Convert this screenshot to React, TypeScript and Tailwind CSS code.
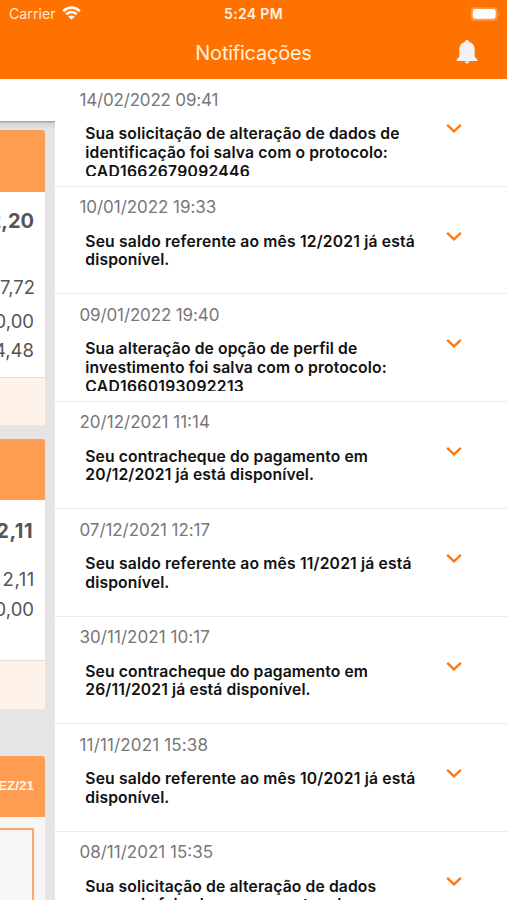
import React from "react";

type Notice = { date: string; tracking: string; lines: string[] };

const notices: Notice[] = [
  { date: "14/02/2022 09:41", tracking: "tracking-[-0.180px]", lines: ["Sua solicitação de alteração de dados de", "identificação foi salva com o protocolo:", "CAD1662679092446"] },
  { date: "10/01/2022 19:33", tracking: "tracking-[-0.050px]", lines: ["Seu saldo referente ao mês 12/2021 já está", "disponível."] },
  { date: "09/01/2022 19:40", tracking: "tracking-[-0.130px]", lines: ["Sua alteração de opção de perfil de", "investimento foi salva com o protocolo:", "CAD1660193092213"] },
  { date: "20/12/2021 11:14", tracking: "tracking-[0px]", lines: ["Seu contracheque do pagamento em", "20/12/2021 já está disponível."] },
  { date: "07/12/2021 12:17", tracking: "tracking-[-0.060px]", lines: ["Seu saldo referente ao mês 11/2021 já está", "disponível."] },
  { date: "30/11/2021 10:17", tracking: "tracking-[0.050px]", lines: ["Seu contracheque do pagamento em", "26/11/2021 já está disponível."] },
  { date: "11/11/2021 15:38", tracking: "tracking-[0.150px]", lines: ["Seu saldo referente ao mês 10/2021 já está", "disponível."] },
  { date: "08/11/2021 15:35", tracking: "tracking-[0px]", lines: ["Sua solicitação de alteração de dados", "pessoais foi salva com o protocolo:"] },
];

function lineTracking(line: string) {
  if (line.startsWith("CAD")) return "tracking-[0.290px]";
  if (line.startsWith("Seu saldo")) return "tracking-[0.170px]";
  return "tracking-[0.120px]";
}

function Header() {
  return (
    <header className="h-[79px] shrink-0 bg-[#ff7200] text-white">
      <div className="grid h-[27px] grid-cols-3 items-center pr-[6px] pl-[9px]">
        <div className="flex items-center gap-[6px] text-[14.2px] text-[#ffe9d6]">
          <span>Carrier</span>
          <svg className="h-[14px] w-[19px]" viewBox="0 0 19 14" fill="none" stroke="#fff8f0" strokeWidth="2.7">
            <path d="M1.2 5.2C6 .4 13 .4 17.8 5.2" />
            <path d="M4.2 8.4C7.3 5.4 11.7 5.4 14.8 8.4" />
            <path d="M9.5 13.8 6.2 10.6C8.200 9 10.800 9 12.800 10.600Z" fill="#fff8f0" stroke="none" />
          </svg>
        </div>
        <div className="pr-[3px] text-center text-[14px] font-semibold tracking-[0.330px] whitespace-nowrap text-[#fff3e6]">5:24 PM</div>
        <div className="flex justify-end">
          <svg className="h-[14px] w-[31px]" viewBox="0 0 31 14">
            <rect x="1" y=".3" width="26.500" height="13.400" rx="3.8" fill="#ff994a" />
            <rect x="2.8" y="2.1" width="22.8" height="9.600" rx="2.4" fill="#fff" />
            <path d="M28.4 4.8v4.4c1.8-.8 1.8-3.6 0-4.4Z" fill="#ff994a" />
          </svg>
        </div>
      </div>
      <div className="grid h-[50px] grid-cols-[1fr_auto_1fr] items-center pr-[28px] pl-[28px]">
        <span />
        <h1 className="pt-[1px] text-[20px] leading-[24px] tracking-[-0.230px] text-[#fff0dc]">Notificações</h1>
        <svg className="h-[26px] w-[24px] justify-self-end" viewBox="0 0 24 26" fill="#f4f1f6">
          <path d="M12 1c-1.3 0-2.1.9-2.1 2.1C6.300 4 4.300 6.900 4.300 10.600v7.200L1.600 20.600v1.300h20.800v-1.300l-2.700-2.800v-7.200c0-3.700-2-6.600-5.600-7.500C14.100 1.900 13.300 1 12 1Z" />
          <path d="M9.600 22.600h4.800c-.3 1.300-1.200 2-2.400 2s-2.100-.7-2.400-2Z" />
        </svg>
      </div>
    </header>
  );
}

function Value({ children, className }: { children: string; className: string }) {
  return <div className={"flex items-center justify-end whitespace-nowrap text-[#555] " + className}>{children}</div>;
}

function Backdrop() {
  return (
    <aside className="flex w-[55px] shrink-0 flex-col overflow-hidden bg-[#e5e5e5]">
      <div className="h-[42px] shrink-0 bg-white" />
      <div className="h-[9px] shrink-0 bg-linear-to-b from-[#969696] via-[#d5d5d5] via-25% to-[#e5e5e5]" />
      <section className="mr-[10px] h-[295px] shrink-0 overflow-hidden rounded-tr-[3px] bg-white">
        <div className="h-[62px] bg-[#ff9e52]" />
        <Value className="h-[58px] pr-[11px] text-[20px] font-bold">2,20</Value>
        <Value className="mt-[23px] h-[30px] pr-[10px] text-[18.500px]">7,72</Value>
        <Value className="mt-[4px] h-[30px] pr-[11px] text-[18.500px]">0,00</Value>
        <Value className="h-[28px] pr-[11px] text-[18.500px]">4,48</Value>
        <div className="mt-[12px] h-[48px] border-t border-[#e5ddd8] bg-[#fff3e9]" />
      </section>
      <section className="mt-[14px] mr-[10px] h-[270px] shrink-0 overflow-hidden rounded-tr-[3px] bg-white">
        <div className="h-[61px] bg-[#ff9e52]" />
        <Value className="h-[61px] pr-[12px] text-[20px] font-bold tracking-[0.500px]">2,11</Value>
        <Value className="mt-[4px] h-[30px] pr-[10px] text-[18.500px] tracking-[0.600px]">2,11</Value>
        <Value className="h-[29px] pr-[11px] text-[18.500px]">0,00</Value>
        <div className="mt-[36px] h-[49px] border-t border-[#e5ddd8] bg-[#fff3e9]" />
      </section>
      <section className="mt-[47px] mr-[10px] h-[160px] shrink-0 overflow-hidden rounded-tr-[3px] bg-[#f5f6f5]">
        <div className="flex h-[61px] items-center justify-end bg-[#ff9e52] pr-[11px] font-['Liberation_Sans'] text-[13.500px] font-bold text-[#fff5eb]">EZ/21</div>
        <div className="mt-[11px] mr-[11px] h-[100px] border-t-2 border-r-2 border-[#ffa668]" />
      </section>
    </aside>
  );
}

function NoticeRow({ date, tracking, lines }: Notice) {
  return (
    <li className="flex h-[107.500px] shrink-0 border-b-[1.500px] border-[#ebebeb] pl-[24.500px]">
      <div className="min-w-0 grow">
        <time className={"block pt-[10.600px] text-[17px] leading-[21px] text-[#77777a] " + tracking}>{date}</time>
        <div className="mt-[12.400px] ml-[5.800px] h-[53px] overflow-hidden pt-[2.200px] text-[15.700px] leading-[18.800px] font-semibold text-[#111]">
          {lines.map((line) => (
            <p key={line} className={"whitespace-nowrap " + lineTracking(line)}>{line}</p>
          ))}
        </div>
      </div>
      <svg className="mt-[44px] mr-[45px] h-[11px] w-[16px] shrink-0" viewBox="0 0 16 11" fill="none" stroke="#ff780f" strokeWidth="2.3">
        <path d="M1.200 1.800 8 8.300 14.800 1.800" />
      </svg>
    </li>
  );
}

export default function App() {
  return (
    <div className="flex h-[900px] w-[507px] flex-col overflow-hidden bg-white font-['Inter',sans-serif]">
      <Header />
      <div className="flex min-h-0 grow">
        <Backdrop />
        <ul className="flex grow flex-col overflow-hidden bg-white">
          {notices.map((notice) => (
            <NoticeRow key={notice.date} {...notice} />
          ))}
        </ul>
      </div>
    </div>
  );
}
